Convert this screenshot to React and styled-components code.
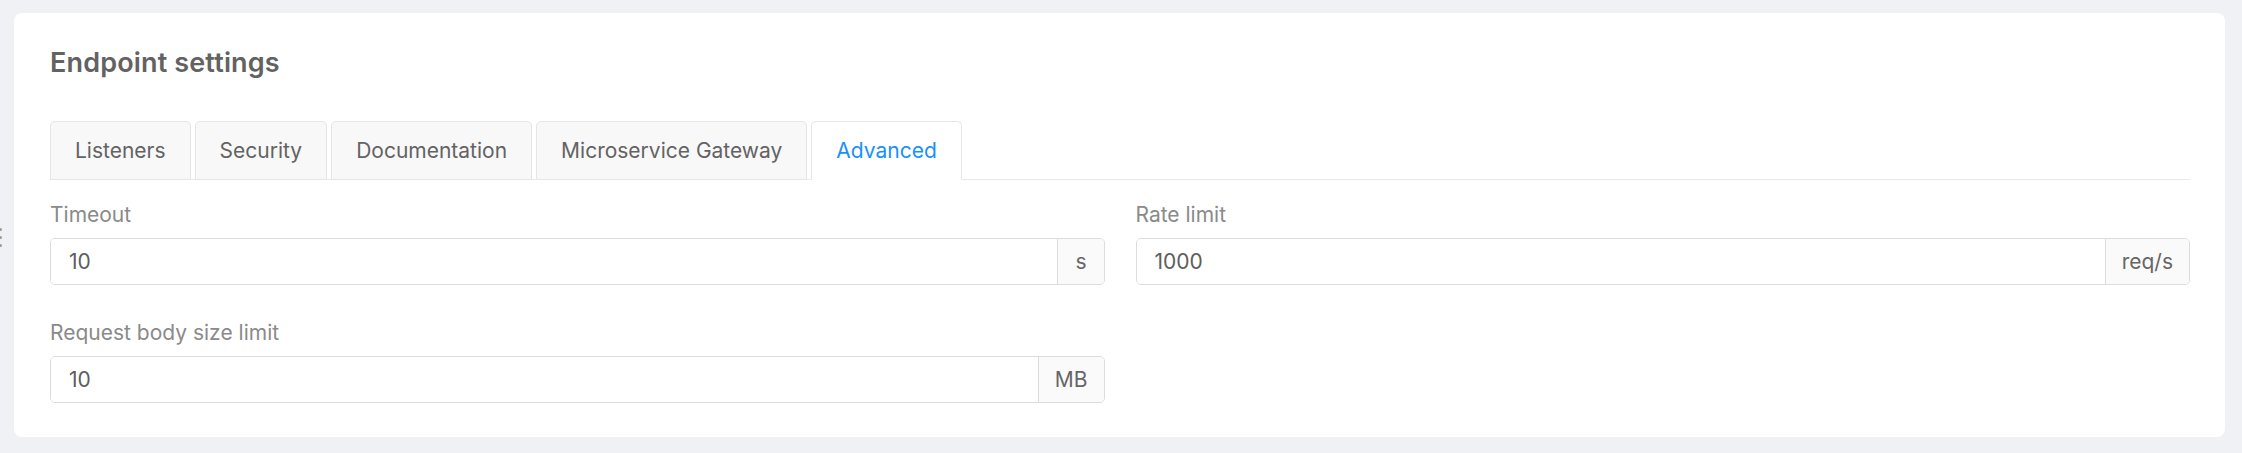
import React from "react";
import styled, { createGlobalStyle } from "styled-components";

const Global = createGlobalStyle`
  html, body { margin: 0; padding: 0; background: #f0f1f5; }
  body { font-family: Inter, "Noto Sans", Arial, sans-serif; }
  * { box-sizing: border-box; }
`;

const Page = styled.div`
  position: relative;
  padding: 13px 17px 15px 14px;
  min-height: 453px;
`;

const Handle = styled.div`
  position: absolute;
  left: -1px;
  top: 228px;
  display: flex;
  flex-direction: column;
  gap: 5px;
  span {
    width: 3px;
    height: 3px;
    border-radius: 50%;
    background: #9a9a9a;
  }
`;

const Card = styled.div`
  background: #fff;
  border-radius: 8px;
  padding: 31px 35px 34px 36px;
`;

const Title = styled.h2`
  margin: 0 0 39px;
  font-size: 27px;
  line-height: 38px;
  font-weight: 600;
  letter-spacing: 0.15px;
  color: #626262;
`;

const TabBar = styled.div`
  display: flex;
  gap: 4px;
  border-bottom: 1px solid #e8e8e8;
  margin-bottom: 21px;
`;

const Tab = styled.div`
  height: 59px;
  margin-bottom: -1px;
  padding: 0 24px;
  display: flex;
  align-items: center;
  font-size: 21px;
  color: ${(p) => (p.$active ? "#1890ff" : "#636363")};
  background: ${(p) => (p.$active ? "#fff" : "#f8f8f8")};
  border: 1px solid #e6e6e6;
  border-bottom-color: ${(p) => (p.$active ? "#fff" : "#e6e6e6")};
  border-radius: 5px 5px 0 0;
`;

const Grid = styled.div`
  display: grid;
  grid-template-columns: 1fr 1fr;
  column-gap: 31px;
  row-gap: 34px;
`;

const Field = styled.div`
  display: flex;
  flex-direction: column;
`;

const Label = styled.label`
  font-size: 21px;
  line-height: 28px;
  color: #8a8a8a;
  margin-bottom: 9px;
`;

const InputGroup = styled.div`
  display: flex;
  height: 47px;
  border: 1px solid #dcdcdc;
  border-radius: 5px;
  overflow: hidden;
`;

const Input = styled.input`
  flex: 1;
  min-width: 0;
  border: none;
  outline: none;
  padding: 0 18px;
  font-family: inherit;
  font-size: 21px;
  color: #5e5e5e;
  background: #fff;
`;

const Addon = styled.span`
  display: flex;
  align-items: center;
  justify-content: center;
  padding: 0 ${(p) => p.$pad || 16}px;
  background: #fafafa;
  border-left: 1px solid #dcdcdc;
  font-size: 21px;
  color: #666;
`;

const tabs = ["Listeners", "Security", "Documentation", "Microservice Gateway", "Advanced"];

export default function App() {
  return (
    <>
      <Global />
      <Page>
        <Handle>
          <span />
          <span />
          <span />
        </Handle>
        <Card>
          <Title>Endpoint settings</Title>
          <TabBar>
            {tabs.map((t) => (
              <Tab key={t} $active={t === "Advanced"}>
                {t}
              </Tab>
            ))}
          </TabBar>
          <Grid>
            <Field>
              <Label>Timeout</Label>
              <InputGroup>
                <Input defaultValue="10" />
                <Addon $pad={17}>s</Addon>
              </InputGroup>
            </Field>
            <Field>
              <Label>Rate limit</Label>
              <InputGroup>
                <Input defaultValue="1000" />
                <Addon $pad={16}>req/s</Addon>
              </InputGroup>
            </Field>
            <Field>
              <Label>Request body size limit</Label>
              <InputGroup>
                <Input defaultValue="10" />
                <Addon $pad={16}>MB</Addon>
              </InputGroup>
            </Field>
          </Grid>
        </Card>
      </Page>
    </>
  );
}
